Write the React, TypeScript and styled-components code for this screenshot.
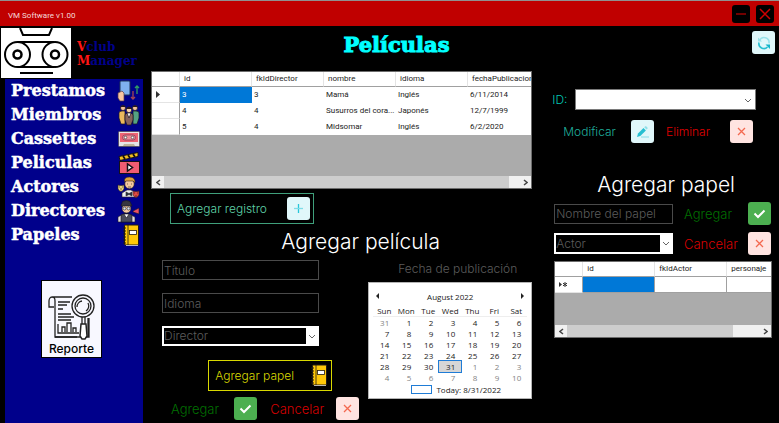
import React from "react";
import styled, { createGlobalStyle } from "styled-components";

const GlobalStyle = createGlobalStyle`
  *, *::before, *::after { box-sizing: border-box; }
  body { margin: 0; background: #000; }
  button, input, select { font: inherit; margin: 0; }
  svg { flex: none; }
`;

const gothic = `Inter, "Open Sans", sans-serif`;
const display = `"DejaVu Serif", serif`;

const Window = styled.div`
  min-height: 100vh;
  display: flex;
  flex-direction: column;
  background: #000;
  color: #fff;
  font-family: ${gothic};
  font-size: 12px;
  font-weight: 300;
  line-height: 16px;
`;

const TitleBar = styled.header`
  display: flex;
  align-items: center;
  gap: 6px;
  height: 26px;
  padding: 0 5px 0 8px;
  background: #c00000;
  border-top: 1px solid #909090;
`;

const AppName = styled.span`
  flex: 1;
  padding-top: 4px;
  font: 400 8px/12px Roboto, sans-serif;
  color: #f6dada;
`;

const WindowButton = styled.button`
  width: 18px;
  height: 18px;
  padding: 0;
  border: 0;
  border-radius: 3px;
  background: #000;
  display: grid;
  place-items: center;
`;

const Body = styled.div`
  flex: 1;
  display: grid;
  grid-template-columns: 143px minmax(0, 1fr);
`;

const Side = styled.div`
  display: flex;
  flex-direction: column;
`;

const Brand = styled.div`
  display: flex;
  align-items: center;
  gap: 6px;
  height: 53px;
  padding: 1px 0 0 1px;
`;

const BrandName = styled.div`
  font: 700 12px/14px ${display};
  color: #00008b;
  padding-top: 2px;

  span { display: block; }
  span::first-letter { color: #ff1515; }
`;

const SidePanel = styled.div`
  flex: 1;
  margin-left: 5px;
  padding: 0 3px 0 6px;
  background: #00008b;
  display: flex;
  flex-direction: column;
`;

const Menu = styled.nav`
  display: flex;
  flex-direction: column;
`;

const MenuLink = styled.a`
  display: flex;
  align-items: center;
  justify-content: space-between;
  height: 24px;
  color: #fff;
  text-decoration: none;
  font: 700 16px/20px ${display};
  -webkit-text-stroke: 0.5px #fff;
`;

const ReportButton = styled.button`
  align-self: center;
  display: flex;
  flex-direction: column;
  align-items: center;
  justify-content: flex-end;
  width: 61px;
  height: 78px;
  margin: 33px 8px 0 0;
  padding: 0 0 1px;
  border: 1px solid #000;
  background: #f8f8ff;
  color: #000;
  font-weight: 500;
  line-height: 15px;
`;

const Main = styled.main`
  display: flex;
  flex-direction: column;
  padding: 0 4px 0 8px;
`;

const TopRow = styled.div`
  display: flex;
  align-items: flex-start;
  height: 45px;
  padding-top: 5px;
`;

const PageTitle = styled.h1`
  flex: 1;
  margin: 0;
  padding-right: 110px;
  text-align: center;
  font: 700 21px/28px ${display};
  color: #00ffff;
  -webkit-text-stroke: 1px #00ffff;
`;

const Columns = styled.div`
  display: grid;
  grid-template-columns: minmax(0, 380fr) minmax(0, 225fr);
  gap: 17px;
`;

const Column = styled.section`
  display: flex;
  flex-direction: column;
  align-items: stretch;
`;

const GridFrame = styled.div<{ $h: number }>`
  display: flex;
  flex-direction: column;
  height: ${(p) => p.$h}px;
  border: 1px solid #6d6d6d;
  background: #ababab;
  overflow: hidden;
`;

const GridBody = styled.div`
  flex: 1;
  overflow: hidden;
`;

const DataTable = styled.table`
  width: 388px;
  table-layout: fixed;
  border-collapse: separate;
  border-spacing: 0;
  background: #fff;
  color: #1c1c1c;
  font: 400 8px/10px Roboto, sans-serif;
  text-align: left;
`;

const HeadCell = styled.th<{ $marker?: boolean }>`
  width: ${(p) => (p.$marker ? 28 : 72)}px;
  height: 15px;
  padding: 0 0 0 ${(p) => (p.$marker ? 0 : 4)}px;
  border-right: 1px solid #e4e4e4;
  border-bottom: 1px solid #a0a0a0;
  font-weight: 400;
  white-space: nowrap;
`;

const Cell = styled.td<{ $selected?: boolean; $lined?: boolean }>`
  height: 16px;
  padding: 0 0 0 2px;
  border-right: ${(p) => (p.$lined ? "1px solid #a0a0a0" : "0")};
  border-bottom: 1px solid ${(p) => (p.$lined ? "#a0a0a0" : "transparent")};
  background: ${(p) => (p.$selected ? "#0078d7" : "#fff")};
  color: ${(p) => (p.$selected ? "#fff" : "inherit")};
  overflow: hidden;
  white-space: nowrap;
`;

const MarkerCell = styled.td`
  height: 16px;
  padding: 0 0 0 4px;
  border-right: 1px solid #a0a0a0;
  border-bottom: 1px solid #e4e4e4;
  svg { display: block; }
`;

const ScrollTrack = styled.div`
  display: flex;
  justify-content: space-between;
  height: 12px;
  background: #f0f0f0;
`;

const ScrollButton = styled.button`
  width: 12px;
  padding: 0;
  border: 0;
  background: #f0f0f0;
  display: grid;
  place-items: center;
`;

const ScrollThumb = styled.div<{ $share: number }>`
  width: ${(p) => p.$share}%;
  margin-right: auto;
  background: #cdcdcd;
`;

const OutlineButton = styled.button<{ $color: string; $line: string }>`
  display: flex;
  align-items: center;
  justify-content: space-between;
  gap: 12px;
  height: 31px;
  padding: 0 3px 0 6px;
  border: 1px solid ${(p) => p.$line};
  background: #000;
  color: ${(p) => p.$color};
`;

const RegisterButton = styled(OutlineButton)`
  align-self: flex-start;
  width: 144px;
  margin: 4px 0 0 19px;
`;

const PaperButton = styled(OutlineButton)`
  align-self: flex-end;
  width: 124px;
  margin-top: 14px;
`;

const SectionTitle = styled.h2`
  margin: 0;
  text-align: center;
  font-size: 21px;
  line-height: 24px;
  font-weight: 300;
  color: #fff;
`;

const MovieTitle = styled(SectionTitle)`
  margin-top: 6px;
  padding-left: 38px;
`;

const PaperTitle = styled(SectionTitle)`
  margin: 30px 0 5px;
  padding-left: 8px;
`;

const MovieForm = styled.form`
  display: grid;
  grid-template-columns: minmax(0, 1fr) 164px;
  column-gap: 18px;
`;

const MovieFields = styled.div`
  display: flex;
  flex-direction: column;
  padding-top: 6px;
`;

const FieldStack = styled.div`
  display: flex;
  flex-direction: column;
  gap: 13px;
  padding: 0 31px 0 11px;
`;

const PaperButtonRow = styled.div`
  display: flex;
  justify-content: flex-end;
  padding-right: 18px;
`;

const TextBox = styled.input`
  width: 100%;
  min-width: 0;
  height: 20px;
  padding: 0 1px;
  border: 1px solid #4a4a4a;
  border-radius: 0;
  background: #000;
  color: #fff;
  &::placeholder { color: #5c5c5c; opacity: 1; }
`;

const SelectFrame = styled.div<{ $light?: boolean }>`
  flex: 1;
  display: grid;
  grid-template-columns: minmax(0, 1fr) 12px;
  align-items: center;
  justify-items: center;
  height: 21px;
  padding: 2px 1px 2px 2px;
  background: #fff;
  border: ${(p) => (p.$light ? "1px solid #7a7a7a" : "0")};
`;

const SelectBox = styled.select<{ $light?: boolean }>`
  appearance: none;
  width: 100%;
  height: 100%;
  padding: 0;
  border: 0;
  border-radius: 0;
  background: ${(p) => (p.$light ? "#fff" : "#000")};
  color: #5c5c5c;
`;

const ActionLabel = styled.label<{ $color: string; $large?: boolean }>`
  color: ${(p) => p.$color};
  font-size: ${(p) => (p.$large ? 13 : 12)}px;
  white-space: nowrap;
`;

const ActionPair = styled.div<{ $gap: number }>`
  display: flex;
  align-items: center;
  justify-content: space-between;
  gap: ${(p) => p.$gap}px;
`;

const tones = { cyan: "#e0f7fa", green: "#4caf50", red: "#ffe4e1" };

const IconButton = styled.button<{ $tone: keyof typeof tones }>`
  flex: none;
  width: 23px;
  height: 23px;
  padding: 0;
  border: 0;
  border-radius: 3px;
  background: ${(p) => tones[p.$tone]};
  display: grid;
  place-items: center;
`;

const PlusTile = styled.span`
  width: 23px;
  height: 23px;
  border-radius: 3px;
  background: ${tones.cyan};
  display: grid;
  place-items: center;
`;

const MovieActions = styled.div`
  display: flex;
  align-items: center;
  gap: 13px;
  margin-top: 6px;
  padding-left: 20px;
`;

const DateLabel = styled.div`
  padding: 7px 15px 0 0;
  text-align: right;
  color: #5c5c5c;
  white-space: nowrap;
`;

const Calendar = styled.div`
  margin-top: 5px;
  padding: 6px 4px 2px;
  background: #fff;
  border: 1px solid #b4b4b4;
  color: #1a1a1a;
  font: 400 8px/11px "Open Sans", sans-serif;
`;

const CalendarHead = styled.div`
  display: flex;
  align-items: center;
  justify-content: space-between;
  height: 14px;
  margin-bottom: 2px;
`;

const MonthButton = styled.button`
  width: 8px;
  height: 12px;
  padding: 0;
  border: 0;
  background: none;
  svg { display: block; }
`;

const MonthTable = styled.table`
  width: 100%;
  border-collapse: separate;
  border-spacing: 0;
  table-layout: fixed;
  th { height: 12px; padding: 0; font-weight: 400; text-align: center; border-bottom: 1px solid #eee; }
`;

const Day = styled.td<{ $muted: boolean; $today: boolean }>`
  height: 11px;
  padding: 0 6px 0 0;
  text-align: right;
  color: ${(p) => (p.$muted ? "#838383" : "inherit")};
  background: ${(p) => (p.$today ? "#d6d6d6" : "transparent")};
  box-shadow: ${(p) => (p.$today ? "0 0 0 1px #1f7cd6" : "none")};
`;

const Today = styled.div`
  display: flex;
  justify-content: center;
  align-items: center;
  gap: 4px;
  padding-left: 12px;
  line-height: 13px;
`;

const TodayMark = styled.span`
  width: 21px;
  height: 9px;
  border: 1px solid #1f7cd6;
`;

const IdRow = styled.div`
  display: flex;
  align-items: center;
  gap: 8px;
  padding: 0 19px 0 3px;
  margin-top: 18px;
`;

const EditRow = styled.div`
  display: flex;
  justify-content: space-between;
  padding: 0 22px 0 14px;
  margin-top: 10px;
`;

const PaperForm = styled.form`
  display: grid;
  grid-template-columns: minmax(0, 1fr) 87px;
  column-gap: 11px;
  row-gap: 7px;
  align-items: center;
  padding: 0 4px 0 5px;
  margin-bottom: 6px;
`;

const PaperGrid = styled.div`
  padding: 0 3px 0 5px;
`;

const ChevronDown = () => (
  <svg width="8" height="5" viewBox="0 0 8 5" fill="none" stroke="#666">
    <path d="M1 1l3 3 3-3" />
  </svg>
);

const ScrollChevron = ({ right }: { right?: boolean }) => (
  <svg width="5" height="7" viewBox="0 0 5 7" fill="none" stroke="#444" strokeWidth="1.5">
    <path d={right ? "M1 1l3 2.5L1 6" : "M4 1L1 3.5 4 6"} />
  </svg>
);

const Cross = () => (
  <svg width="9" height="9" viewBox="0 0 9 9" stroke="#f4694f" strokeWidth="1.3">
    <path d="M1 1l7 7M8 1L1 8" />
  </svg>
);

const Check = () => (
  <svg width="13" height="10" viewBox="0 0 13 10" fill="none" stroke="#fff" strokeWidth="2">
    <path d="M1.5 4.5L5 8l6.500-6.500" />
  </svg>
);

const Pencil = () => (
  <svg width="13" height="13" viewBox="0 0 13 13" fill="none">
    <path d="M1 12l1-3.600 5.500-5.400 2.400 2.400L4.300 11z" fill="#26bfd1" />
    <path d="M8.200 2.300l1-1 .9-.1 1.500 1.500v.9l-1 1z" fill="#8edfe8" />
    <path d="M5 12h8" stroke="#a5e5ec" strokeWidth="1.500" />
  </svg>
);

const Refresh = () => (
  <svg width="14" height="14" viewBox="0 0 14 14" fill="none">
    <path d="M2.500 4.500A5 5 0 0 1 12 7.300" stroke="#9ae2ea" strokeWidth="1.600" />
    <path d="M1 1.500v4h4z" fill="#9ae2ea" />
    <path d="M2 6.500A5 5 0 0 0 10.500 11" stroke="#26bfd1" strokeWidth="1.600" />
    <path d="M8.500 8.500H13v4.500z" fill="#12b5cb" />
  </svg>
);

const Plus = () => (
  <svg width="11" height="11" viewBox="0 0 11 11">
    <path d="M5.500 1v9" stroke="#26c6da" strokeWidth="1.300" />
    <path d="M1 5.500h9" stroke="#7edce7" strokeWidth="1.300" />
  </svg>
);

const CassetteLogo = () => (
  <svg width="70" height="50" viewBox="0 0 70 50" fill="none" stroke="#000" strokeWidth="2">
    <rect width="70" height="50" fill="#fff" stroke="none" />
    <path d="M19 0l3 7h26l3-7" />
    <path d="M17 14h36M17 39h36" />
    <circle cx="16.500" cy="26.500" r="12.500" fill="#fff" />
    <circle cx="54" cy="26.500" r="12.500" fill="#fff" />
    <circle cx="16.500" cy="26.500" r="4" strokeWidth="2.500" />
    <circle cx="54" cy="26.500" r="4" strokeWidth="2.500" />
    <path d="M19 45h33" />
  </svg>
);

const ReportIcon = () => (
  <svg width="47" height="47" viewBox="0 0 47 47" fill="none" stroke="#222" strokeWidth="1.300">
    <path d="M24 3H4C2 3 1 5 1 7v6h5M4 3c2 0 3 1 3 4v36h22" />
    <path d="M7 43h27M37 43h4V24M40 24v19" />
    <path d="M10 8h12M10 11h9M10 15h5M10 20h13M10 23h16M10 26h13" strokeWidth="1.500" />
    <path d="M10 30v9h21M14 38v-5h3v5M19 38v-9h4v9M25 38v-4h3v4" />
    <circle cx="35" cy="12" r="11" fill="#f8f8ff" />
    <circle cx="35" cy="12" r="8" />
    <path d="M29 13a6 6 0 0 1 5-6M40 9a6 6 0 0 1-2 8" />
    <path d="M34 23v7M37 23v7" />
    <path d="M33 30h5l1 12-2 3h-3l-2-3z" fill="#fff" strokeWidth="1.500" />
  </svg>
);

const LoanIcon = () => (
  <svg width="23" height="22" viewBox="0 0 23 22">
    <rect x="3" y="1" width="10" height="14" rx="1" fill="#7fb2ee" stroke="#1e3455" />
    <path d="M1 13l4-2 2 2v8H3l-2-3z" fill="#f7c6a0" stroke="#583b48" strokeWidth=".7" />
    <path d="M16 11v8m-2-2l2 2 2-2" stroke="#a44554" strokeWidth="1.300" fill="none" />
    <path d="M20 14V6m-2 2l2-2 2 2" stroke="#2f9e63" strokeWidth="1.300" fill="none" />
  </svg>
);

const MembersIcon = () => (
  <svg width="22" height="22" viewBox="0 0 22 22" stroke="#1a1420" strokeWidth=".7">
    <path d="M1 14V9q0-2 3-2h3v13H3z" fill="#eab95d" />
    <path d="M21 14V9q0-2-3-2h-3v13h4z" fill="#54a283" />
    <circle cx="5" cy="4" r="2.500" fill="#f3c39a" />
    <circle cx="17" cy="4" r="2.500" fill="#f3c39a" />
    <path d="M7 16v-5q0-2 4-2t4 2v5l-2 5H9z" fill="#86635c" />
    <path d="M9 9l2 5 2-5z" fill="#fff" />
    <circle cx="11" cy="6" r="2.700" fill="#f6cfaa" />
    <path d="M2.500 3Q5 0 7.500 3M14.500 3Q17 0 19.500 3M8 5q3-4 6 0" fill="#2b1b20" />
  </svg>
);

const CassetteIcon = () => (
  <svg width="22" height="16" viewBox="0 0 22 16">
    <rect x=".5" y=".5" width="21" height="15" rx="1" fill="#e6e4e7" stroke="#55506a" />
    <rect x="2" y="2" width="18" height="9" fill="#ee6374" />
    <rect x="4.500" y="4" width="13" height="5" rx="2.500" fill="#f08d98" stroke="#773b55" strokeWidth=".7" />
    <circle cx="7.500" cy="6.500" r="1.300" fill="#fff" stroke="#444" strokeWidth=".7" />
    <circle cx="14.500" cy="6.500" r="1.300" fill="#fff" stroke="#444" strokeWidth=".7" />
    <path d="M5 15l1-2h10l1 2" fill="#bfb59a" />
  </svg>
);

const ClapperIcon = () => (
  <svg width="22" height="22" viewBox="0 0 22 22" stroke="#141018">
    <path d="M1 4.500L20 .5v4L2 8.500z" fill="#f4bf20" />
    <path d="M5 4l2 3M10 3l2 3M15 2l2 3" strokeWidth="1.800" />
    <rect x="1.500" y="9.500" width="20" height="12" fill="#ef5c72" />
    <path d="M9.500 12v7l5-3.500z" fill="#fff" strokeWidth="1.500" />
  </svg>
);

const ActorIcon = () => (
  <svg width="23" height="22" viewBox="0 0 23 22" stroke="#33241f" strokeWidth=".6">
    <path d="M5 21v-4l5-3h4l5 3v4z" fill="#edf2f4" />
    <path d="M9 16l3 1.500 3-1.500v4l-3-1.500-3 1.500z" fill="#243747" />
    <circle cx="12.500" cy="8" r="4.700" fill="#f5c99d" />
    <path d="M7.500 6q-1-5 5-5 6 0 5.500 6l-2-2H9z" fill="#dda23c" />
    <path d="M10 8h1M14 8h1M11 11h3" stroke="#222" />
    <path d="M1 9q3 1 6 0v4q-3 5-6 0z" fill="#ead47d" />
    <path d="M2 11h1M5 11h1M3 13h2" stroke="#382d20" />
    <path d="M16 15q3 1 6 0v4q-3 5-6 0z" fill="#dd4a42" />
    <path d="M17 17h1M20 17h1M18 20h2" stroke="#381515" />
  </svg>
);

const DirectorIcon = () => (
  <svg width="23" height="23" viewBox="0 0 23 23" stroke="#18181f" strokeWidth=".6">
    <path d="M1 22v-5l5-3h6l6 3v5z" fill="#e4dce0" />
    <path d="M4 22v-7l3-1h5l3 1v7z" fill="#4b4c5c" />
    <path d="M7 14l2.500 4 2.500-4z" fill="#fff" />
    <circle cx="9.500" cy="8.500" r="4.500" fill="#f4caa1" />
    <path d="M4 6l1.500-4.500q4-2 7.500 0L15 6z" fill="#373641" />
    <circle cx="7.500" cy="8.500" r="1.500" fill="#d9e4ee" stroke="#20202b" />
    <circle cx="11.500" cy="8.500" r="1.500" fill="#d9e4ee" stroke="#20202b" />
    <path d="M16 11l6-3v6l-6-2z" fill="#e95065" />
  </svg>
);

const BookIcon = () => (
  <svg width="18" height="23" viewBox="0 0 18 23" stroke="#221b13">
    <rect x="2.500" y="1" width="14" height="20" rx="1" fill="#ffc808" />
    <path d="M6 1v20" strokeWidth=".8" />
    <path d="M1 4h3M1 7h3M1 10h3M1 13h3M1 16h3M1 19h3" strokeWidth="1.200" />
    <rect x="7.500" y="6.500" width="7" height="4" fill="#fff" strokeWidth=".8" />
    <path d="M4 21.500h12" stroke="#fff" strokeWidth=".7" />
  </svg>
);

const menu: [string, () => React.ReactElement][] = [
  ["Prestamos", LoanIcon],
  ["Miembros", MembersIcon],
  ["Cassettes", CassetteIcon],
  ["Peliculas", ClapperIcon],
  ["Actores", ActorIcon],
  ["Directores", DirectorIcon],
  ["Papeles", BookIcon],
];

const movies = [
  ["3", "3", "Mamá", "Inglés", "6/11/2014"],
  ["4", "4", "Susurros del cora...", "Japonés", "12/7/1999"],
  ["5", "4", "Midsomar", "Inglés", "6/2/2020"],
];

const weekdays = ["Sun", "Mon", "Tue", "Wed", "Thu", "Fri", "Sat"];
const weeks = Array.from({ length: 6 }, (_, w) =>
  Array.from({ length: 7 }, (_, d) => new Date(2022, 6, 31 + w * 7 + d))
);

function ScrollBar({ share }: { share: number }) {
  return (
    <ScrollTrack>
      <ScrollButton type="button" aria-label="Desplazar a la izquierda"><ScrollChevron /></ScrollButton>
      <ScrollThumb $share={share} />
      <ScrollButton type="button" aria-label="Desplazar a la derecha"><ScrollChevron right /></ScrollButton>
    </ScrollTrack>
  );
}

function Dropdown({ label, id, text, light }: { label?: string; id: string; text: string; light?: boolean }) {
  return (
    <SelectFrame $light={light}>
      <SelectBox id={id} aria-label={label} $light={light}>
        <option>{text}</option>
      </SelectBox>
      <ChevronDown />
    </SelectFrame>
  );
}

type ActionProps = {
  id: string;
  text: string;
  color: string;
  tone: keyof typeof tones;
  gap?: number;
  large?: boolean;
  children: React.ReactNode;
};

function Action({ id, text, color, tone, gap = 12, large, children }: ActionProps) {
  return (
    <ActionPair $gap={gap}>
      <ActionLabel htmlFor={id} $color={color} $large={large}>{text}</ActionLabel>
      <IconButton id={id} type="button" $tone={tone}>{children}</IconButton>
    </ActionPair>
  );
}

function Sidebar() {
  return (
    <Side>
      <Brand>
        <CassetteLogo />
        <BrandName><span>Vclub</span><span>Manager</span></BrandName>
      </Brand>
      <SidePanel>
        <Menu>
          {menu.map(([name, Icon]) => (
            <MenuLink key={name} href="#">{name}<Icon /></MenuLink>
          ))}
        </Menu>
        <ReportButton type="button"><ReportIcon />Reporte</ReportButton>
      </SidePanel>
    </Side>
  );
}

function MovieTable() {
  return (
    <GridFrame $h={118}>
      <GridBody>
        <DataTable>
          <thead>
            <tr>
              <HeadCell $marker />
              {["id", "fkIdDirector", "nombre", "idioma", "fechaPublicacion"].map((h) => <HeadCell key={h}>{h}</HeadCell>)}
            </tr>
          </thead>
          <tbody>
            {movies.map((row, r) => (
              <tr key={row[0]}>
                <MarkerCell>
                  {r === 0 && <svg width="4" height="7" viewBox="0 0 4 7"><path d="M0 0l4 3.500L0 7z" fill="#333" /></svg>}
                </MarkerCell>
                {row.map((v, c) => <Cell key={c} $selected={r === 0 && c === 0}>{v}</Cell>)}
              </tr>
            ))}
          </tbody>
        </DataTable>
      </GridBody>
      <ScrollBar share={91} />
    </GridFrame>
  );
}

function PaperTable() {
  return (
    <GridFrame $h={77}>
      <GridBody>
        <DataTable>
          <thead>
            <tr>
              <HeadCell $marker />
              <HeadCell>id</HeadCell>
              <HeadCell>fkIdActor</HeadCell>
              <HeadCell>personaje</HeadCell>
              <HeadCell />
              <HeadCell />
            </tr>
          </thead>
          <tbody>
            <tr>
              <MarkerCell>
                <svg width="9" height="7" viewBox="0 0 9 7">
                  <path d="M0 1l3 2.500L0 6z" fill="#333" />
                  <path d="M6 1v5M4 2.200l4 2.600M8 2.200L4 4.800" stroke="#333" />
                </svg>
              </MarkerCell>
              <Cell $selected $lined /><Cell $lined /><Cell $lined /><Cell $lined /><Cell $lined />
            </tr>
          </tbody>
        </DataTable>
      </GridBody>
      <ScrollBar share={77} />
    </GridFrame>
  );
}

function MonthCalendar() {
  return (
    <Calendar>
      <CalendarHead>
        <MonthButton type="button" aria-label="Mes anterior"><svg width="8" height="12"><path d="M6 3v6L3 6z" fill="#222" /></svg></MonthButton>
        August 2022
        <MonthButton type="button" aria-label="Mes siguiente"><svg width="8" height="12"><path d="M2 3v6l3-3z" fill="#222" /></svg></MonthButton>
      </CalendarHead>
      <MonthTable>
        <thead><tr>{weekdays.map((d) => <th key={d}>{d}</th>)}</tr></thead>
        <tbody>
          {weeks.map((week, w) => (
            <tr key={w}>
              {week.map((d) => (
                <Day key={d.getTime()} $muted={d.getMonth() !== 7} $today={d.getMonth() === 7 && d.getDate() === 31}>
                  {d.getDate()}
                </Day>
              ))}
            </tr>
          ))}
        </tbody>
      </MonthTable>
      <Today><TodayMark />Today: 8/31/2022</Today>
    </Calendar>
  );
}

export default function App() {
  return (
    <Window>
      <GlobalStyle />
      <TitleBar>
        <AppName>VM Software v1.00</AppName>
        <WindowButton type="button" aria-label="Minimizar">
          <svg width="12" height="12" stroke="#b00000" strokeWidth="1.300"><path d="M1 6h10" /></svg>
        </WindowButton>
        <WindowButton type="button" aria-label="Cerrar">
          <svg width="12" height="12" stroke="#d00000" strokeWidth="1.500"><path d="M1 1l10 10M11 1L1 11" /></svg>
        </WindowButton>
      </TitleBar>
      <Body>
        <Sidebar />
        <Main>
          <TopRow>
            <PageTitle>Películas</PageTitle>
            <IconButton type="button" $tone="cyan" aria-label="Actualizar"><Refresh /></IconButton>
          </TopRow>
          <Columns>
            <Column>
              <MovieTable />
              <RegisterButton type="button" $color="#5fd3a8" $line="#3f9f7b">
                Agregar registro<PlusTile><Plus /></PlusTile>
              </RegisterButton>
              <MovieTitle>Agregar película</MovieTitle>
              <MovieForm>
                <MovieFields>
                  <FieldStack>
                    <TextBox placeholder="Título" aria-label="Título" />
                    <TextBox placeholder="Idioma" aria-label="Idioma" />
                    <Dropdown id="director" label="Director" text="Director" />
                  </FieldStack>
                  <PaperButtonRow>
                    <PaperButton type="button" $color="#d8d800" $line="#d8d800">Agregar papel<BookIcon /></PaperButton>
                  </PaperButtonRow>
                  <MovieActions>
                    <Action id="add-movie" text="Agregar" color="#007000" tone="green" gap={15} large><Check /></Action>
                    <Action id="cancel-movie" text="Cancelar" color="#d80000" tone="red" large><Cross /></Action>
                  </MovieActions>
                </MovieFields>
                <div>
                  <DateLabel>Fecha de publicación</DateLabel>
                  <MonthCalendar />
                </div>
              </MovieForm>
            </Column>
            <Column>
              <IdRow>
                <ActionLabel htmlFor="movie-id" $color="#00c4b4">ID:</ActionLabel>
                <Dropdown id="movie-id" text="" light />
              </IdRow>
              <EditRow>
                <Action id="edit-movie" text="Modificar" color="#1fae9c" tone="cyan" gap={15}><Pencil /></Action>
                <Action id="delete-movie" text="Eliminar" color="#e00000" tone="red" gap={20}><Cross /></Action>
              </EditRow>
              <PaperTitle>Agregar papel</PaperTitle>
              <PaperForm>
                <TextBox placeholder="Nombre del papel" aria-label="Nombre del papel" />
                <Action id="add-paper" text="Agregar" color="#007000" tone="green" gap={8} large><Check /></Action>
                <Dropdown id="actor" label="Actor" text="Actor" />
                <Action id="cancel-paper" text="Cancelar" color="#d80000" tone="red" gap={8} large><Cross /></Action>
              </PaperForm>
              <PaperGrid><PaperTable /></PaperGrid>
            </Column>
          </Columns>
        </Main>
      </Body>
    </Window>
  );
}
